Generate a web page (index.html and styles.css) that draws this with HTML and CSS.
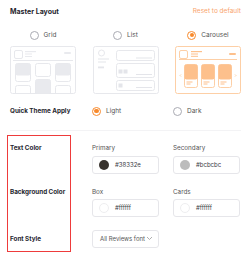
FILE: index.html
```html
<!DOCTYPE html>
<html>
<head>
<meta charset="utf-8">
<link rel="stylesheet" href="styles.css">
</head>
<body>
<div class="panel">
  <div class="head">
    <span class="title">Master Layout</span>
    <span class="reset">Reset to default</span>
  </div>

  <div class="layouts">
    <div class="layout">
      <div class="radio"><span class="dot"></span>Grid</div>
      <div class="preview">
        <svg viewBox="0 0 66 48" width="66" height="48">
          <g fill="none" stroke="#e7e8ec" stroke-width="1">
            <rect x="0.5" y="0.5" width="65" height="47" rx="2"/>
            <rect x="4.5" y="4.5" width="8" height="8" rx="1.5"/>
            <line x1="3" y1="14.5" x2="63" y2="14.5"/>
            <rect x="5.5" y="17.5" width="15" height="18" rx="2"/>
            <rect x="25.5" y="17.5" width="15" height="13" rx="2"/>
            <rect x="45.5" y="17.5" width="15" height="18" rx="2"/>
            <rect x="5.5" y="39.5" width="15" height="14" rx="2"/>
            <rect x="25.5" y="33.5" width="15" height="18" rx="2"/>
            <rect x="45.5" y="39.5" width="15" height="14" rx="2"/>
          </g>
          <g fill="#e9eaee">
            <rect x="15" y="5" width="11" height="1.2"/>
            <rect x="15" y="7.5" width="7" height="1"/>
            <rect x="15" y="10" width="7" height="1"/>
            <rect x="54" y="6" width="7" height="2" rx="1"/>
            <rect x="5.5" y="17.5" width="15" height="12" rx="2"/>
            <rect x="45.5" y="17.5" width="15" height="12" rx="2"/>
            <rect x="25.5" y="33.5" width="15" height="14" rx="2"/>
          </g>
        </svg>
      </div>
    </div>
    <div class="layout">
      <div class="radio"><span class="dot"></span>List</div>
      <div class="preview">
        <svg viewBox="0 0 66 48" width="66" height="48">
          <g fill="none" stroke="#e7e8ec" stroke-width="1">
            <rect x="0.5" y="0.5" width="65" height="47" rx="2"/>
            <circle cx="8.5" cy="7" r="3"/>
            <rect x="23.5" y="4.5" width="38" height="10" rx="2"/>
            <rect x="23.5" y="17.5" width="38" height="14" rx="2"/>
            <rect x="23.5" y="34.5" width="38" height="10" rx="2"/>
          </g>
          <g fill="#e4e5ea">
            <rect x="5" y="12.5" width="11" height="1"/>
            <rect x="5" y="15.5" width="8" height="1"/>
            <rect x="5" y="20.5" width="6" height="1.8"/>
            <rect x="43" y="11.5" width="16" height="1"/>
            <rect x="25.5" y="23.5" width="4" height="4"/>
            <rect x="30.5" y="23.5" width="4" height="4"/>
            <rect x="43" y="28" width="16" height="1"/>
            <rect x="25.5" y="37.5" width="4" height="4"/>
            <rect x="43" y="41" width="16" height="1"/>
          </g>
        </svg>
      </div>
    </div>
    <div class="layout">
      <div class="radio on"><span class="dot"></span>Carousel</div>
      <div class="preview">
        <svg viewBox="0 0 66 48" width="66" height="48">
          <g fill="none" stroke="#fdcfa6" stroke-width="1">
            <rect x="0.5" y="0.5" width="65" height="47" rx="2"/>
            <rect x="4.5" y="4.5" width="8" height="8" rx="1.5"/>
            <line x1="4" y1="13.5" x2="62" y2="13.5"/>
            <rect x="9.5" y="18.5" width="13" height="23" rx="2"/>
            <rect x="26.5" y="18.5" width="13" height="23" rx="2"/>
            <rect x="43.5" y="18.5" width="13" height="23" rx="2"/>
            <polyline points="6,28.5 5,29.5 6,30.5"/>
            <polyline points="60,28.5 61,29.5 60,30.5"/>
          </g>
          <g fill="#fdc08c">
            <rect x="16" y="5" width="11" height="1.2"/>
            <rect x="16" y="7.5" width="7" height="1"/>
            <rect x="16" y="9.8" width="7" height="1"/>
            <rect x="54" y="7" width="7" height="2" rx="1"/>
            <rect x="9.5" y="18.5" width="13" height="15" rx="2"/>
            <rect x="26.5" y="18.5" width="13" height="15" rx="2"/>
            <rect x="43.5" y="18.5" width="13" height="15" rx="2"/>
            <rect x="11.5" y="35.5" width="6" height="1"/>
            <rect x="11.5" y="37.5" width="4" height="1"/>
            <rect x="28.5" y="35.5" width="6" height="1"/>
            <rect x="28.5" y="37.5" width="4" height="1"/>
            <rect x="45.5" y="35.5" width="6" height="1"/>
            <rect x="45.5" y="37.5" width="4" height="1"/>
          </g>
        </svg>
      </div>
    </div>
  </div>

  <div class="row quick">
    <div class="label">Quick Theme Apply</div>
    <div class="radio on"><span class="dot"></span>Light</div>
    <div class="radio"><span class="dot"></span>Dark</div>
  </div>

  <div class="divider"></div>

  <div class="row colors">
    <div class="label">Text Color</div>
    <div class="field">
      <div class="cap">Primary</div>
      <div class="input"><span class="sw dark"></span>#38332e</div>
    </div>
    <div class="field">
      <div class="cap">Secondary</div>
      <div class="input"><span class="sw grey"></span>#bcbcbc</div>
    </div>
  </div>

  <div class="row colors second">
    <div class="label">Background Color</div>
    <div class="field">
      <div class="cap">Box</div>
      <div class="input"><span class="sw white"></span>#ffffff</div>
    </div>
    <div class="field">
      <div class="cap">Cards</div>
      <div class="input"><span class="sw white"></span>#ffffff</div>
    </div>
  </div>

  <div class="row font">
    <div class="label">Font Style</div>
    <div class="select"><span>All Reviews font</span>
      <svg width="7" height="5" viewBox="0 0 7 5"><polyline points="1,1 3.5,3.5 6,1" fill="none" stroke="#9a9a9a" stroke-width="0.8"/></svg>
    </div>
  </div>

  <div class="annot"></div>
</div>
</body>
</html>
```

FILE: styles.css
```css
* { box-sizing: border-box; margin: 0; padding: 0; }
html, body { background: #fff; }
body {
  font-family: "Inter", "Noto Sans", sans-serif;
  color: #333;
  width: 250px;
  height: 272px;
  overflow: hidden;
}
.panel {
  position: relative;
  padding: 6px 9px 0 10px;
}
.head {
  display: flex;
  justify-content: space-between;
  align-items: center;
  height: 10px;
}
.title {
  font-size: 7px;
  font-weight: 700;
  color: #26262e;
}
.reset {
  font-size: 6.5px;
  color: #f9a46c;
}
.layouts {
  display: flex;
  justify-content: space-between;
  margin-top: 14.5px;
}
.layout {
  width: 66px;
  display: flex;
  flex-direction: column;
  align-items: center;
}
.radio {
  display: flex;
  align-items: center;
  gap: 5px;
  font-size: 6.5px;
  color: #555;
  height: 9px;
}
.dot {
  width: 9px;
  height: 9px;
  border-radius: 50%;
  border: 1.3px solid #a9aab2;
  display: flex;
  align-items: center;
  justify-content: center;
}
.radio.on .dot {
  border-color: #f88a2c;
}
.radio.on .dot::after {
  content: "";
  width: 4.2px;
  height: 4.2px;
  border-radius: 50%;
  background: #f88a2c;
}
.preview {
  margin-top: 6.5px;
  height: 48px;
}
.preview svg { display: block; }
.row {
  display: grid;
  grid-template-columns: 68px 67px 67px;
  column-gap: 14px;
}
.label {
  font-size: 6.3px;
  font-weight: 700;
  color: #26262e;
  line-height: 10px;
  white-space: nowrap;
}
.quick {
  margin-top: 12px;
  align-items: center;
}
.divider {
  height: 1px;
  background: #f3f3f5;
  margin-top: 14px;
}
.colors { margin-top: 11.5px; }
.colors.second { margin-top: 13px; }
.cap {
  font-size: 6.3px;
  color: #555;
  line-height: 10px;
}
.input {
  margin-top: 3px;
  height: 18px;
  border: 1px solid #e6e6ea;
  border-radius: 3px;
  display: flex;
  align-items: center;
  gap: 6px;
  padding-left: 6px;
  font-size: 6px;
  color: #3a3a44;
}
.second .input { margin-top: 2px; }
.sw {
  width: 10px;
  height: 10px;
  border-radius: 50%;
}
.sw.dark { background: #38332e; }
.sw.grey { background: #bcbcbc; }
.sw.white { background: #fff; border: 1px solid #eeeef0; }
.font {
  margin-top: 13px;
  align-items: center;
}
.select {
  grid-column: 2;
  height: 18px;
  border: 1px solid #e6e6ea;
  border-radius: 3px;
  display: flex;
  align-items: center;
  justify-content: space-between;
  padding: 0 5px 0 7px;
  font-size: 6px;
  color: #555;
  white-space: nowrap;
}
.annot {
  position: absolute;
  left: 7px;
  top: 135px;
  width: 64px;
  height: 117px;
  border: 1.5px solid #ee3b3b;
}
```
